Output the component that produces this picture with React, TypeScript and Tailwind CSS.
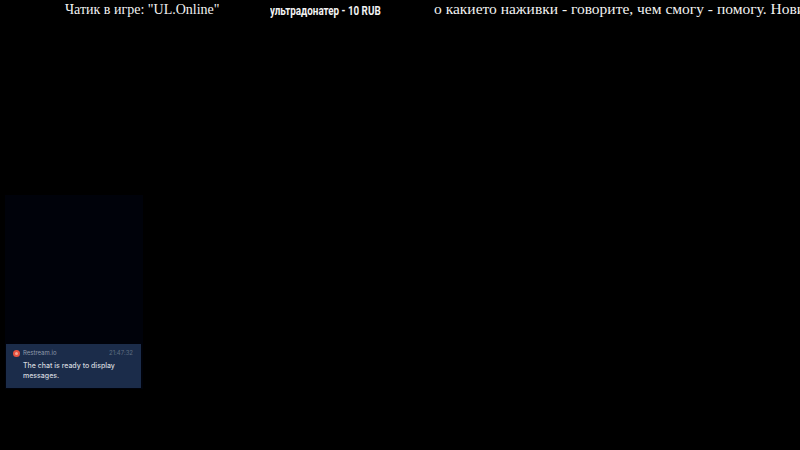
export default function App() {
  return (
    <div className="w-[800px] h-[450px] bg-black overflow-hidden flex flex-col">
      {/* Ticker */}
      <div className="h-[20px] flex items-center whitespace-nowrap overflow-hidden text-[#f2f2f2]">
        <span className="ml-[65px] w-[205px] shrink-0 -mt-[2px] text-[14px] font-['Liberation_Serif',serif]">
          Чатик в игре: "UL.Online"
        </span>
        <span className="w-[164px] shrink-0 mt-[2px] text-[12px] font-bold font-['Roboto',sans-serif] origin-left scale-x-[0.82]">
          ультрадонатер - 10 RUB
        </span>
        <span className="shrink-0 -mt-[2px] text-[15.5px] font-['Liberation_Serif',serif]">
          о какието наживки - говорите, чем смогу - помогу. Нови
        </span>
      </div>

      {/* Chat */}
      <div className="mt-[175px] ml-[5px] w-[138px] h-[194px] bg-[#00020a] flex flex-col justify-end pb-[1px] pl-[1px] pr-[2px]">
        <div className="h-[44px] bg-[#1b2c4a] pl-[7px] pr-[8px] pt-[5px] font-['Inter',sans-serif]">
          <div className="flex items-center">
            <div className="w-[7px] h-[7px] rounded-full bg-[#e8523f] shrink-0 flex items-center justify-center">
              <div className="w-[3px] h-[3px] rounded-full bg-[#f4a595]" />
            </div>
            <span className="ml-[3px] text-[6px] leading-[8px] text-[#8f9aaa]">Restream.io</span>
            <span className="ml-auto text-[6px] leading-[8px] text-[#5f6c80]">21:47:32</span>
          </div>
          <p className="mt-[4px] ml-[10px] text-[7px] leading-[10px] font-medium text-[#d3d8df]">
            The chat is ready to display messages.
          </p>
        </div>
      </div>
    </div>
  );
}
